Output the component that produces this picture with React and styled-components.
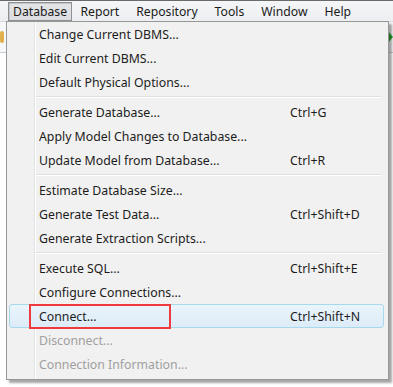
import React from "react";
import styled, { createGlobalStyle } from "styled-components";

const GlobalStyle = createGlobalStyle`
  html, body {
    margin: 0;
    padding: 0;
    background: #ffffff;
  }
  body {
    font-family: "Noto Sans", "Open Sans", "Noto Sans CJK SC", sans-serif;
    font-size: 12px;
    color: #1a1a1a;
  }
`;

const Window = styled.div`
  position: relative;
  width: 393px;
  height: 387px;
  overflow: hidden;
  background: #ffffff;
`;

const MenuBar = styled.div`
  display: flex;
  align-items: center;
  height: 22px;
  padding-left: 8px;
  border-top: 1px solid #6a6a6a;
  box-sizing: border-box;
  background: linear-gradient(#f5f6f8, #eceef1);
  border-bottom: 1px solid #d6d8dc;
`;

const BarItem = styled.div`
  height: 19px;
  display: flex;
  align-items: center;
  padding: 0 ${(p) => (p.$pressed ? "4px" : "7.5px")};
  font-size: 12.2px;
  box-sizing: border-box;
  border: 1px solid ${(p) => (p.$pressed ? "#8e8f8f" : "transparent")};
  background: ${(p) => (p.$pressed ? "linear-gradient(#e4e5e7, #dcdde0)" : "transparent")};
  box-shadow: ${(p) => (p.$pressed ? "inset 1px 1px 0 #c4c5c8" : "none")};
`;

const Workspace = styled.div`
  display: flex;
  flex-direction: column;
`;

const ToolStrip = styled.div`
  height: 30px;
  border-bottom: 1px solid #c9ccd1;
  background: #f7f8fa;
  display: flex;
  justify-content: space-between;
  align-items: center;
`;

const Canvas = styled.div`
  height: 330px;
  background: #ffffff;
  display: flex;
`;

const LeftPanel = styled.div`
  width: 54px;
  border-right: 1px solid #222;
  margin-top: 330px;
`;

const Dropdown = styled.div`
  position: absolute;
  left: 6px;
  top: 21px;
  width: 383px;
  padding: 0 0 3px 2px;
  box-sizing: border-box;
  border: 1px solid #979797;
  box-shadow: 3px 3px 2px rgba(0, 0, 0, 0.35);
  background: linear-gradient(
    to right,
    #f1f1f1 0,
    #f1f1f1 27px,
    #e2e3e3 27px,
    #e2e3e3 28px,
    #ffffff 28px,
    #ffffff 29px,
    #f1f1f1 29px
  );
`;

const Item = styled.div`
  position: relative;
  height: 24px;
  display: flex;
  align-items: center;
  margin-right: 4px;
  padding-left: 29px;
  box-sizing: border-box;
  font-size: 12.3px;
  color: ${(p) => (p.$disabled ? "#a0a0a0" : "#1c1c1c")};
  border: 1px solid ${(p) => (p.$hover ? "#a8d8eb" : "transparent")};
  border-radius: 3px;
  background: ${(p) =>
    p.$hover ? "linear-gradient(#eaf4fb, #dcecf8)" : "transparent"};
`;

const Label = styled.span`
  flex: 1;
`;

const Shortcut = styled.span`
  width: 93px;
`;

const Separator = styled.div`
  height: 1px;
  margin: 2px 6px 2px 27px;
  background: #e0e0e0;
  border-bottom: 1px solid #ffffff;
`;

const Marker = styled.div`
  position: absolute;
  left: 19px;
  top: -1px;
  width: 138px;
  height: 21px;
  border: 2px solid #ef3b3b;
`;

const ToolIcon = styled.div`
  width: ${(p) => p.$w}px;
  height: 12px;
  background: ${(p) => p.$color};
  border-radius: 2px;
`;

const GreenArrow = () => (
  <svg width="6" height="14" viewBox="0 0 6 14" style={{ display: "block" }}>
    <path d="M1 1 L1 13 L6 7 Z" fill="#2fa82f" />
  </svg>
);

const groups = [
  [
    { label: "Change Current DBMS..." },
    { label: "Edit Current DBMS..." },
    { label: "Default Physical Options..." },
  ],
  [
    { label: "Generate Database...", key: "Ctrl+G" },
    { label: "Apply Model Changes to Database..." },
    { label: "Update Model from Database...", key: "Ctrl+R" },
  ],
  [
    { label: "Estimate Database Size..." },
    { label: "Generate Test Data...", key: "Ctrl+Shift+D" },
    { label: "Generate Extraction Scripts..." },
  ],
  [
    { label: "Execute SQL...", key: "Ctrl+Shift+E" },
    { label: "Configure Connections..." },
    { label: "Connect...", key: "Ctrl+Shift+N", hover: true, marked: true },
    { label: "Disconnect...", disabled: true },
    { label: "Connection Information...", disabled: true },
  ],
];

export default function App() {
  return (
    <>
      <GlobalStyle />
      <Window>
        <MenuBar>
          <BarItem $pressed>Database</BarItem>
          <BarItem>Report</BarItem>
          <BarItem>Repository</BarItem>
          <BarItem>Tools</BarItem>
          <BarItem>Window</BarItem>
          <BarItem>Help</BarItem>
        </MenuBar>
        <Workspace>
          <ToolStrip>
            <ToolIcon $w={4} $color="#e2b04a" />
            <GreenArrow />
          </ToolStrip>
          <Canvas>
            <LeftPanel />
          </Canvas>
        </Workspace>
        <Dropdown>
          {groups.map((group, gi) => (
            <React.Fragment key={gi}>
              {gi > 0 && <Separator />}
              {group.map((it) => (
                <Item key={it.label} $hover={it.hover} $disabled={it.disabled}>
                  {it.marked && <Marker />}
                  <Label>{it.label}</Label>
                  {it.key && <Shortcut>{it.key}</Shortcut>}
                </Item>
              ))}
            </React.Fragment>
          ))}
        </Dropdown>
      </Window>
    </>
  );
}
